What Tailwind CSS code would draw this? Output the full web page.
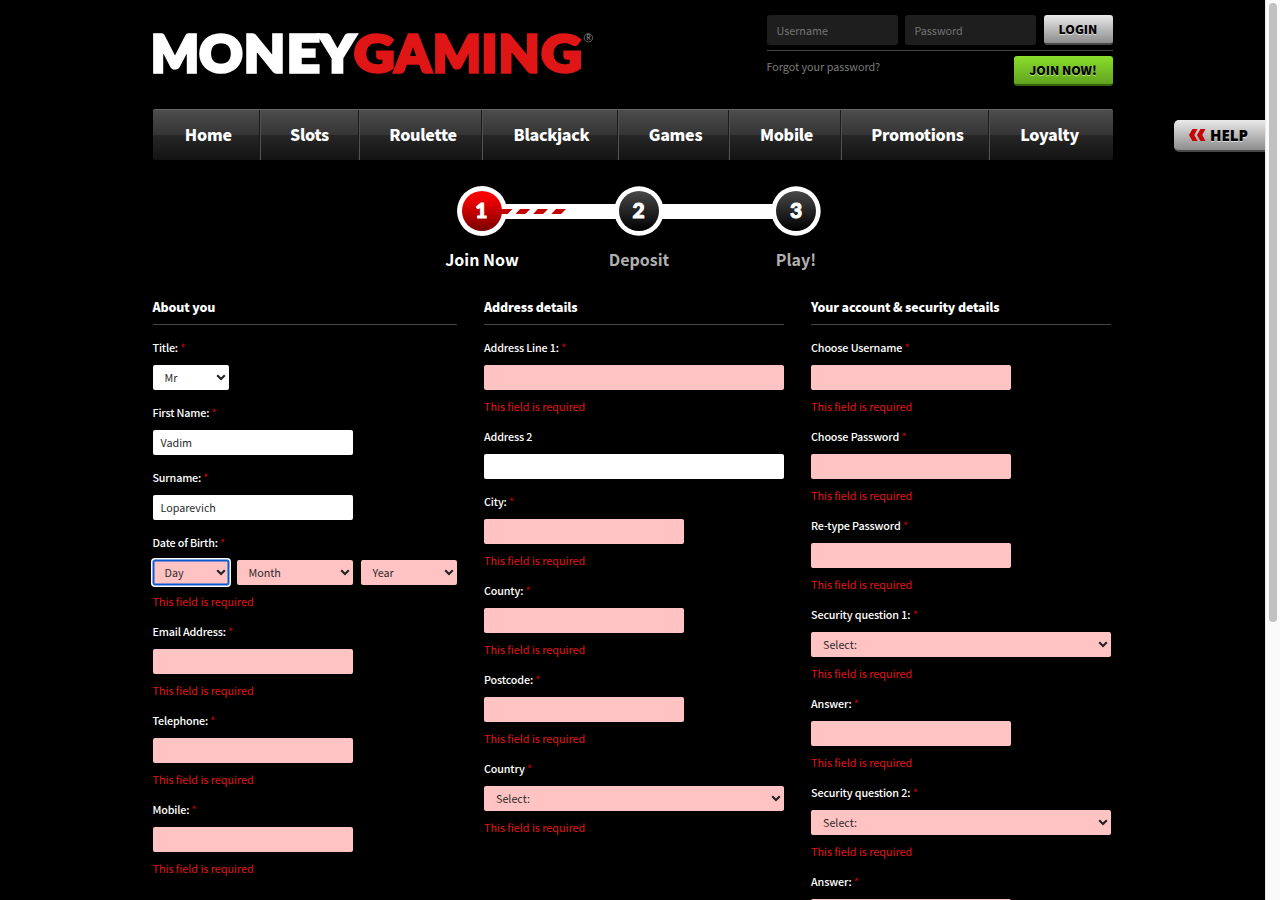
<!DOCTYPE html>
<html lang="en">
<head>
<meta charset="utf-8">
<title>MoneyGaming - Join Now</title>
<script src="https://cdn.jsdelivr.net/npm/@tailwindcss/browser@4"></script>
</head>
<body class="bg-black">
<svg class="hidden">
  <symbol id="chev" viewBox="0 0 10 7"><path d="M1.2 1.2 5 5l3.8-3.8" fill="none" stroke="#222" stroke-width="2.1"/></symbol>
</svg>
<div class="relative h-[900px] w-[1280px] overflow-hidden bg-black font-['Noto_Sans_CJK_SC','Open_Sans',sans-serif] text-[10.75px] leading-5 text-white">
  <div class="ml-[153px] w-[960px]">
    <header class="flex h-[109px] justify-between">
      <svg class="mt-[15px] h-[76px] w-[446px] overflow-visible" viewBox="153 15 446 76" font-family="Lato, sans-serif" font-weight="900" font-size="51.5">
        <g fill="#fff" stroke="#fff" stroke-width="3.4">
          <text x="151" y="71.6" textLength="48" lengthAdjust="spacingAndGlyphs">M</text>
          <text x="199.3" y="71.6" textLength="43.4" lengthAdjust="spacingAndGlyphs">O</text>
          <text x="244" y="71.6" textLength="41" lengthAdjust="spacingAndGlyphs">N</text>
          <text x="286.8" y="71.6" textLength="33" lengthAdjust="spacingAndGlyphs">E</text>
          <text x="319.8" y="71.6" textLength="35.4" lengthAdjust="spacingAndGlyphs">Y</text>
        </g>
        <g fill="#e01616" stroke="#e01616" stroke-width="3.4">
          <text x="354" y="71.6" textLength="40.5" lengthAdjust="spacingAndGlyphs">G</text>
          <text x="395" y="71.6" textLength="36" lengthAdjust="spacingAndGlyphs">A</text>
          <text x="433" y="71.6" textLength="48" lengthAdjust="spacingAndGlyphs">M</text>
          <text x="481.5" y="71.6" textLength="16" lengthAdjust="spacingAndGlyphs">I</text>
          <text x="498.8" y="71.6" textLength="41" lengthAdjust="spacingAndGlyphs">N</text>
          <text x="541.3" y="71.6" textLength="40.5" lengthAdjust="spacingAndGlyphs">G</text>
        </g>
        <circle cx="588.4" cy="37.8" r="4.2" fill="none" stroke="#777" stroke-width=".8"/>
        <text x="586.3" y="40.4" font-size="7" font-weight="400" fill="#999">R</text>
      </svg>
      <div class="w-[346px] pt-[15px]">
        <div class="flex h-9 justify-between border-b border-[#444] pb-[5px]">
          <div class="h-[30px] w-[131px] rounded-[3px] bg-[#1e1e1e] pl-[9.5px] leading-[32px] text-[#747474]">Username</div>
          <div class="-ml-[1px] h-[30px] w-[131px] rounded-[3px] bg-[#1e1e1e] pl-[9.5px] leading-[32px] text-[#747474]">Password</div>
          <div class="h-[30px] w-[69px] rounded-[3px] border-b-2 border-[#484848] bg-linear-to-b from-[#ebebeb] to-[#8d8d8d] pr-px text-center text-[12.2px] font-black leading-[29px] text-black [text-shadow:0_1px_0_#ddd]">LOGIN</div>
        </div>
        <div class="mt-[5px] flex justify-between">
          <a class="-ml-[0.5px] mt-[1px] text-[#7c7c7c]">Forgot your password?</a>
          <div class="h-[30px] w-[99px] rounded-[3px] border-b-2 border-[#35600a] bg-linear-to-b from-[#8ade2c] to-[#62a31f] pr-px text-center text-[12.2px] font-black leading-[29px] tracking-[-0.1px] text-black [text-shadow:0_1px_0_#b5e67e]">JOIN NOW!</div>
        </div>
      </div>
    </header>

    <nav class="flex h-[51px] overflow-hidden rounded-[2px] border-t border-[#666] bg-[linear-gradient(#4d4d4d,#343434_50%,#272727_50%,#131313)] text-center text-[16px] font-black leading-[48px] tracking-[-0.26px]">
      <a class="w-[107px] border-r border-[#1c1c1c] pl-[4.5px]">Home</a>
      <a class="w-[99px] border-x border-l-[#505050] border-r-[#1c1c1c]">Slots</a>
      <a class="w-[123px] border-x border-l-[#505050] border-r-[#1c1c1c] pl-[5px]">Roulette</a>
      <a class="w-[136px] border-x border-l-[#505050] border-r-[#1c1c1c] pl-[3px]">Blackjack</a>
      <a class="w-[111px] border-x border-l-[#505050] border-r-[#1c1c1c] pl-[4px]">Games</a>
      <a class="w-[112px] border-x border-l-[#505050] border-r-[#1c1c1c] pl-[3px]">Mobile</a>
      <a class="w-[148px] border-x border-l-[#505050] border-r-[#1c1c1c] pl-[5px]">Promotions</a>
      <a class="w-[124px] border-l border-[#505050] pr-[4px]">Loyalty</a>
    </nav>

    <div class="ml-[272px] mt-[24px] w-[428px]">
      <svg class="block h-[54px] w-[414px]" viewBox="425 184 414 54" font-family="Lato, sans-serif" font-weight="900" font-size="21" text-anchor="middle" fill="#fff">
        <defs>
          <linearGradient id="r" x2="0" y2="1"><stop stop-color="#ff0000"/><stop offset=".15" stop-color="#f80000"/><stop offset="1" stop-color="#780000"/></linearGradient>
          <linearGradient id="k" x2="0" y2="1"><stop stop-color="#484848"/><stop offset="1" stop-color="#000"/></linearGradient>
        </defs>
        <path d="M482 204h314v15H482z"/>
        <circle cx="482" cy="211" r="25"/><circle cx="639" cy="211" r="24.7"/><circle cx="796" cy="211" r="24.7"/>
        <path fill="#c40000" d="M500 209h12.5l-5 5H500zM520 209h10.2l-5 5h-9.7zM537.8 209H548l-5 5h-9.8zM556 209h10l-5 5h-9.7z"/>
        <circle cx="482" cy="211" r="20" fill="url(#r)"/><circle cx="639" cy="211" r="20" fill="url(#k)"/><circle cx="796" cy="211" r="20" fill="url(#k)"/>
        <g stroke="#fff" stroke-width="1">
          <text x="481.3" y="218">1</text><text x="638.5" y="218">2</text><text x="796" y="218">3</text>
        </g>
      </svg>
      <div class="mt-[9px] flex text-center text-[16px] font-bold leading-6 text-[#b0b0b0]">
        <span class="w-[114px] shrink-0 text-white">Join Now</span><span class="ml-[43px] w-[114px] shrink-0">Deposit</span><span class="ml-[43px] w-[114px] shrink-0">Play!</span>
      </div>
    </div>

    <main class="mt-[26px] flex gap-[27px]">
      <section class="w-[304px] -indent-[0.5px]">
        <h2 class="mb-[13px] h-[28px] border-b border-[#444] text-[12.4px] font-black tracking-[-0.14px]">About you</h2>
        <div class="h-[65px]"><label class="block font-medium tracking-[-0.17px]">Title: <span class="font-normal text-[#c00]">*</span></label>
          <div class="mt-[7px] flex h-[25px] w-[76px] items-center justify-between rounded-[2px] bg-white pl-3 pr-[3px] text-[#2b2b2b]"><span class="pt-px">Mr</span><svg class="h-[7px] w-[10px]"><use href="#chev"/></svg></div></div>
        <div class="h-[65px]"><label class="block font-medium tracking-[-0.17px]">First Name: <span class="font-normal text-[#c00]">*</span></label>
          <div class="mt-[7px] h-[25px] w-[200px] rounded-[2px] bg-white pl-2 leading-[26px] text-[#2b2b2b]">Vadim</div></div>
        <div class="h-[65px]"><label class="block font-medium tracking-[-0.17px]">Surname: <span class="font-normal text-[#c00]">*</span></label>
          <div class="mt-[7px] h-[25px] w-[200px] rounded-[2px] bg-white pl-2 leading-[26px] text-[#2b2b2b]">Loparevich</div></div>
        <div class="h-[89px]"><label class="block font-medium tracking-[-0.17px]">Date of Birth: <span class="font-normal text-[#c00]">*</span></label>
          <div class="mt-[7px] flex gap-2 text-[#2b2b2b]">
            <div class="flex h-[25px] w-[76px] items-center justify-between rounded-[2px] bg-[#ffc3c3] pl-3 pr-[3px] shadow-[inset_0_0_0_1.5px_#0b57d0,0_0_0_0.5px_#0b57d0,0_0_0_2px_#fff]"><span class="pt-px">Day</span><svg class="h-[7px] w-[10px]"><use href="#chev"/></svg></div>
            <div class="flex h-[25px] w-[116px] items-center justify-between rounded-[2px] bg-[#ffc3c3] pl-3 pr-[3px]"><span class="pt-px">Month</span><svg class="h-[7px] w-[10px]"><use href="#chev"/></svg></div>
            <div class="flex h-[25px] w-[96px] items-center justify-between rounded-[2px] bg-[#ffc3c3] pl-3 pr-[3px]"><span class="pt-px">Year</span><svg class="h-[7px] w-[10px]"><use href="#chev"/></svg></div>
          </div><p class="mt-[7px] text-[#e01616]">This field is required</p></div>
        <div class="h-[89px]"><label class="block font-medium tracking-[-0.17px]">Email Address: <span class="font-normal text-[#c00]">*</span></label>
          <div class="mt-[7px] h-[25px] w-[200px] rounded-[2px] bg-[#ffc3c3]"></div><p class="mt-[7px] text-[#e01616]">This field is required</p></div>
        <div class="h-[89px]"><label class="block font-medium tracking-[-0.17px]">Telephone: <span class="font-normal text-[#c00]">*</span></label>
          <div class="mt-[7px] h-[25px] w-[200px] rounded-[2px] bg-[#ffc3c3]"></div><p class="mt-[7px] text-[#e01616]">This field is required</p></div>
        <div class="h-[89px]"><label class="block font-medium tracking-[-0.17px]">Mobile: <span class="font-normal text-[#c00]">*</span></label>
          <div class="mt-[7px] h-[25px] w-[200px] rounded-[2px] bg-[#ffc3c3]"></div><p class="mt-[7px] text-[#e01616]">This field is required</p></div>
      </section>

      <section class="w-[300px]">
        <h2 class="mb-[13px] h-[28px] border-b border-[#444] text-[12.4px] font-black tracking-[-0.14px]">Address details</h2>
        <div class="h-[89px]"><label class="block font-medium tracking-[-0.14px]">Address Line 1: <span class="font-normal text-[#c00]">*</span></label>
          <div class="mt-[7px] h-[25px] rounded-[2px] bg-[#ffc3c3]"></div><p class="mt-[7px] text-[#e01616]">This field is required</p></div>
        <div class="h-[65px]"><label class="block font-medium tracking-[-0.14px]">Address 2</label>
          <div class="mt-[7px] h-[25px] rounded-[2px] bg-white"></div></div>
        <div class="h-[89px]"><label class="block font-medium tracking-[-0.14px]">City: <span class="font-normal text-[#c00]">*</span></label>
          <div class="mt-[7px] h-[25px] w-[200px] rounded-[2px] bg-[#ffc3c3]"></div><p class="mt-[7px] text-[#e01616]">This field is required</p></div>
        <div class="h-[89px]"><label class="block font-medium tracking-[-0.14px]">County: <span class="font-normal text-[#c00]">*</span></label>
          <div class="mt-[7px] h-[25px] w-[200px] rounded-[2px] bg-[#ffc3c3]"></div><p class="mt-[7px] text-[#e01616]">This field is required</p></div>
        <div class="h-[89px]"><label class="block font-medium tracking-[-0.14px]">Postcode: <span class="font-normal text-[#c00]">*</span></label>
          <div class="mt-[7px] h-[25px] w-[200px] rounded-[2px] bg-[#ffc3c3]"></div><p class="mt-[7px] text-[#e01616]">This field is required</p></div>
        <div class="h-[89px]"><label class="block font-medium tracking-[-0.14px]">Country <span class="font-normal text-[#c00]">*</span></label>
          <div class="mt-[7px] flex h-[25px] items-center justify-between rounded-[2px] bg-[#ffc3c3] pl-3 pr-[3px] text-[#2b2b2b]"><span class="pt-px">Select:</span><svg class="h-[7px] w-[10px]"><use href="#chev"/></svg></div><p class="mt-[7px] text-[#e01616]">This field is required</p></div>
      </section>

      <section class="w-[300px]">
        <h2 class="mb-[13px] h-[28px] border-b border-[#444] text-[12.4px] font-black tracking-[-0.14px]">Your account &amp; security details</h2>
        <div class="h-[89px]"><label class="block font-medium tracking-[-0.12px]">Choose Username <span class="font-normal text-[#c00]">*</span></label>
          <div class="mt-[7px] h-[25px] w-[200px] rounded-[2px] bg-[#ffc3c3]"></div><p class="mt-[7px] text-[#e01616]">This field is required</p></div>
        <div class="h-[89px]"><label class="block font-medium tracking-[-0.12px]">Choose Password <span class="font-normal text-[#c00]">*</span></label>
          <div class="mt-[7px] h-[25px] w-[200px] rounded-[2px] bg-[#ffc3c3]"></div><p class="mt-[7px] text-[#e01616]">This field is required</p></div>
        <div class="h-[89px]"><label class="block font-medium tracking-[-0.12px]">Re-type Password <span class="font-normal text-[#c00]">*</span></label>
          <div class="mt-[7px] h-[25px] w-[200px] rounded-[2px] bg-[#ffc3c3]"></div><p class="mt-[7px] text-[#e01616]">This field is required</p></div>
        <div class="h-[89px]"><label class="block font-medium tracking-[-0.12px]">Security question 1: <span class="font-normal text-[#c00]">*</span></label>
          <div class="mt-[7px] flex h-[25px] items-center justify-between rounded-[2px] bg-[#ffc3c3] pl-3 pr-[3px] text-[#2b2b2b]"><span class="pt-px">Select:</span><svg class="h-[7px] w-[10px]"><use href="#chev"/></svg></div><p class="mt-[7px] text-[#e01616]">This field is required</p></div>
        <div class="h-[89px]"><label class="block font-medium tracking-[-0.12px]">Answer: <span class="font-normal text-[#c00]">*</span></label>
          <div class="mt-[7px] h-[25px] w-[200px] rounded-[2px] bg-[#ffc3c3]"></div><p class="mt-[7px] text-[#e01616]">This field is required</p></div>
        <div class="h-[89px]"><label class="block font-medium tracking-[-0.12px]">Security question 2: <span class="font-normal text-[#c00]">*</span></label>
          <div class="mt-[7px] flex h-[25px] items-center justify-between rounded-[2px] bg-[#ffc3c3] pl-3 pr-[3px] text-[#2b2b2b]"><span class="pt-px">Select:</span><svg class="h-[7px] w-[10px]"><use href="#chev"/></svg></div><p class="mt-[7px] text-[#e01616]">This field is required</p></div>
        <div class="h-[60px]"><label class="block font-medium tracking-[-0.12px]">Answer: <span class="font-normal text-[#c00]">*</span></label>
          <div class="mt-[7px] h-[25px] w-[200px] rounded-[2px] bg-[#ffc3c3]"></div></div>
      </section>
    </main>
  </div>

  <div class="absolute right-[15px] top-[120px] flex h-8 w-[91px] items-center rounded-l-[5px] border-b-2 border-[#484848] bg-linear-to-b from-[#ebebeb] to-[#8d8d8d] pl-[15px] font-['Open_Sans',sans-serif] text-[15px] font-extrabold text-black [text-shadow:0_1px_0_#ddd]">
    <svg class="mr-[4px] h-[12px] w-[17px]" viewBox="0 0 17 12" fill="#c80000"><path d="M3.5 0H8.5L5.2 6l3.3 6h-5L0 6zM11.5 0h5L13.2 6l3.3 6h-5L8 6z"/></svg>HELP
  </div>
  <div class="absolute inset-y-0 right-0 w-[15px] border-l border-[#e8e8e8] bg-[#fafafa]">
    <div class="ml-[3px] mt-[3px] h-[619px] w-2 rounded-full bg-[#c1c1c1]"></div>
  </div>
</div>
</body>
</html>
